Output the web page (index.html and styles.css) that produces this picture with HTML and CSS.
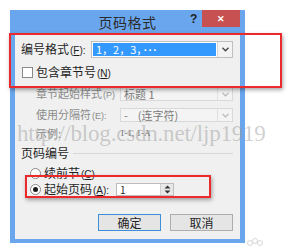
FILE: index.html
```html
<!DOCTYPE html>
<html lang="zh-CN">
<head>
    <meta charset="UTF-8">
    <meta name="viewport" content="width=device-width, initial-scale=1.0">
    <title>页码格式</title>
    <link rel="stylesheet" href="styles.css">
</head>
<body>
    <div class="window">
        <div class="titlebar">
            <span class="title">页码格式</span>
            <span class="help">?</span>
            <span class="close">&#x2715;</span>
        </div>
        <div class="content">
            <div class="row row-format">
                <span class="label">编号格式<span class="key">(<u>F</u>):</span></span>
                <div class="combo combo-active">
                    <span class="combo-text"><span class="selected">1，2，3，<span class="dots">···</span></span></span>
                    <span class="combo-arrow"><svg width="7" height="5" viewBox="0 0 7 5"><path d="M0.5 0.8 L3.5 3.8 L6.5 0.8" fill="none" stroke="#444" stroke-width="1.3"/></svg></span>
                </div>
            </div>
            <div class="row row-check">
                <span class="checkbox"></span>
                <span class="label">包含章节号<span class="key">(<u>N</u>)</span></span>
            </div>
            <div class="row row-sub row-style">
                <span class="label disabled">章节起始样式<span class="key">(P)</span></span>
                <div class="combo combo-disabled">
                    <span class="combo-text">标题 1</span>
                    <span class="combo-arrow"><svg width="7" height="5" viewBox="0 0 7 5"><path d="M0.5 0.8 L3.5 3.8 L6.5 0.8" fill="none" stroke="#b5b5b5" stroke-width="1.2"/></svg></span>
                </div>
            </div>
            <div class="row row-sub row-sep">
                <span class="label disabled">使用分隔符<span class="key">(E):</span></span>
                <div class="combo combo-disabled">
                    <span class="combo-text">-&nbsp;&nbsp;&nbsp;&nbsp;(连字符)</span>
                    <span class="combo-arrow"><svg width="7" height="5" viewBox="0 0 7 5"><path d="M0.5 0.8 L3.5 3.8 L6.5 0.8" fill="none" stroke="#b5b5b5" stroke-width="1.2"/></svg></span>
                </div>
            </div>
            <div class="row row-sub row-sample">
                <span class="label disabled">示例:</span>
                <span class="sample">1-1, 1-A</span>
            </div>
            <div class="row row-group">
                <span class="label">页码编号</span>
                <span class="group-line"></span>
            </div>
            <div class="row row-radio row-continue">
                <span class="radio"></span>
                <span class="label">续前节<span class="key">(<u>C</u>)</span></span>
            </div>
            <div class="row row-radio row-start">
                <span class="radio radio-on"></span>
                <span class="label">起始页码<span class="key">(<u>A</u>):</span></span>
                <div class="spin">
                    <span class="spin-text">1</span>
                    <span class="spin-buttons">
                        <svg width="7" height="4" viewBox="0 0 7 4"><path d="M0.5 3.5 L3.5 0.5 L6.5 3.5 Z" fill="#333"/></svg>
                        <svg width="7" height="4" viewBox="0 0 7 4"><path d="M0.5 0.5 L3.5 3.5 L6.5 0.5 Z" fill="#333"/></svg>
                    </span>
                </div>
            </div>
            <div class="row row-buttons">
                <button class="btn btn-default">确定</button>
                <button class="btn">取消</button>
            </div>
        </div>
    </div>

    <div class="mark mark-format"></div>
    <div class="mark mark-start"></div>
    <div class="watermark">http://blog.csdn.net/ljp1919</div>
    <svg class="paw" width="22" height="10" viewBox="0 0 22 10">
        <circle cx="6" cy="6" r="2.5" fill="none" stroke="#d8d8d8"/>
        <circle cx="11" cy="4" r="2.5" fill="none" stroke="#d8d8d8"/>
        <circle cx="16" cy="6" r="2.5" fill="none" stroke="#d8d8d8"/>
    </svg>
</body>
</html>
```

FILE: styles.css
```css
body {
    margin: 0;
    background-color: #ffffff;
    font-family: "Noto Sans CJK SC", "Liberation Sans", sans-serif;
    font-size: 12px;
    color: #1e1e1e;
    position: relative;
    width: 296px;
    height: 246px;
    overflow: hidden;
}
.window {
    margin: 10px 0 0 10px;
    width: 235px;
    background-color: #6aa6ee;
    box-sizing: border-box;
    padding: 0 5px 4px 5px;
}
.titlebar {
    height: 23px;
    position: relative;
    display: flex;
    align-items: center;
    justify-content: center;
    margin: 0 -5px;
}
.title {
    font-size: 14px;
    color: #2b2b2b;
    letter-spacing: 0.5px;
}
.help {
    position: absolute;
    left: 180px;
    top: 2px;
    font-family: "Liberation Sans", sans-serif;
    font-weight: bold;
    font-size: 12px;
    color: #222;
}
.close {
    position: absolute;
    right: 5px;
    top: 0;
    width: 38px;
    height: 17px;
    background-color: #c75050;
    color: #ffffff;
    font-size: 9px;
    font-weight: bold;
    display: flex;
    align-items: center;
    justify-content: center;
}
.content {
    background-color: #f0f0f0;
    height: 206px;
    padding: 8px 7px 0 6px;
    box-sizing: border-box;
}
.row {
    display: flex;
    align-items: center;
}
.label {
    white-space: nowrap;
    line-height: 1;
}
.key {
    font-family: "Liberation Sans", sans-serif;
    font-size: 10px;
    margin-left: 1px;
}
.label u {
    text-decoration: underline;
}
.disabled {
    color: #8b8b8b;
}
.row-format {
    height: 17px;
    justify-content: space-between;
}
.combo {
    display: flex;
    box-sizing: border-box;
    border: 1px solid #bfbfbf;
}
.combo-active {
    width: 142px;
    height: 17px;
    background-color: #ffffff;
}
.combo-text {
    flex: 1;
    display: flex;
    align-items: center;
    padding: 1px;
    font-family: "Noto Sans CJK SC", sans-serif;
}
.selected {
    display: block;
    width: 100%;
    height: 100%;
    background-color: #3399ff;
    color: #ffffff;
    font-size: 11px;
    line-height: 13px;
    padding-left: 3px;
    box-sizing: border-box;
}
.dots {
    font-family: "Liberation Sans", sans-serif;
    font-weight: bold;
    letter-spacing: 1px;
    margin-left: 2px;
}
.combo-arrow {
    width: 14px;
    border-left: 1px solid #d4d4d4;
    display: flex;
    align-items: center;
    justify-content: center;
    background-color: #f3f3f3;
}
.row-check {
    height: 14px;
    margin-top: 7px;
    padding-left: 1px;
}
.checkbox {
    width: 11px;
    height: 11px;
    box-sizing: border-box;
    border: 1px solid #8a8a8a;
    background-color: #ffffff;
    margin-right: 3px;
}
.row-sub {
    padding-left: 15px;
}
.row-sub .label {
    width: 84px;
    font-size: 11px;
}
.row-sub .key {
    font-size: 9px;
}
.row-style {
    height: 14px;
    margin-top: 8px;
}
.row-sep {
    height: 14px;
    margin-top: 7px;
}
.combo-disabled {
    width: 113px;
    height: 14px;
    border-color: #d9d9d9;
    background-color: #f4f4f4;
    color: #7a7a7a;
}
.combo-disabled .combo-text {
    padding-left: 3px;
    font-size: 11px;
}
.combo-disabled .combo-arrow {
    border-left-color: #e0e0e0;
    background-color: #f4f4f4;
}
.row-sample {
    height: 12px;
    margin-top: 5px;
}
.sample {
    font-family: "Liberation Serif", serif;
    font-size: 9px;
    color: #6a6a6a;
}
.row-group {
    height: 12px;
    margin-top: 8px;
}
.group-line {
    flex: 1;
    height: 1px;
    background-color: #d7d7d7;
    margin-left: 4px;
}
.row-radio {
    padding-left: 9px;
}
.row-continue {
    height: 12px;
    margin-top: 8px;
}
.row-start {
    height: 13px;
    margin-top: 4px;
}
.row-start .label {
    width: 72px;
}
.radio {
    width: 11px;
    height: 11px;
    box-sizing: border-box;
    border: 1px solid #8a8a8a;
    border-radius: 50%;
    background-color: #ffffff;
    margin-right: 3px;
    display: flex;
    align-items: center;
    justify-content: center;
}
.radio-on::after {
    content: "";
    width: 5px;
    height: 5px;
    border-radius: 50%;
    background-color: #1a1a1a;
}
.spin {
    width: 58px;
    height: 13px;
    box-sizing: border-box;
    border: 1px solid #bdbdbd;
    background-color: #ffffff;
    display: flex;
}
.spin-text {
    flex: 1;
    padding-left: 3px;
    font-size: 10px;
    line-height: 11px;
}
.spin-buttons {
    width: 12px;
    background-color: #e8e8e8;
    border-left: 1px solid #d0d0d0;
    display: flex;
    flex-direction: column;
    align-items: center;
    justify-content: space-around;
}
.row-buttons {
    margin-top: 18px;
    justify-content: flex-end;
    gap: 9px;
}
.btn {
    width: 63px;
    height: 17px;
    padding: 0;
    border: 1px solid #adadad;
    background-color: #e5e5e5;
    font-family: "Noto Sans CJK SC", sans-serif;
    font-size: 12px;
    line-height: 15px;
    color: #1e1e1e;
}
.btn-default {
    border-color: #3c8fd8;
}
.mark {
    position: absolute;
    border: 2px solid #ec2a2c;
    box-shadow: 1px 2px 4px rgba(0, 0, 0, 0.35);
    box-sizing: border-box;
}
.mark-format {
    left: 9px;
    top: 33px;
    width: 273px;
    height: 55px;
}
.mark-start {
    left: 25px;
    top: 175px;
    width: 186px;
    height: 23px;
}
.watermark {
    position: absolute;
    left: 17px;
    top: 121px;
    font-family: "Liberation Serif", serif;
    font-size: 23px;
    color: rgba(150, 150, 150, 0.45);
    white-space: nowrap;
    letter-spacing: -0.2px;
}
.paw {
    position: absolute;
    left: 244px;
    top: 237px;
}
```
